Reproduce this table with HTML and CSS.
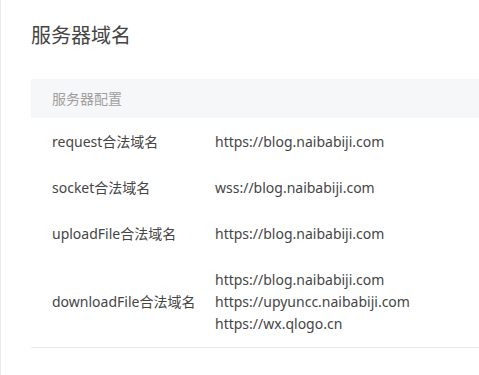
FILE: index.html
```html
<!DOCTYPE html>
<html lang="zh-CN">
<head>
<meta charset="utf-8">
<link rel="stylesheet" href="styles.css">
</head>
<body>
<div class="page">
  <h2 class="title">服务器域名</h2>
  <div class="table">
    <div class="head">服务器配置</div>
    <div class="row first"><div class="label">request合法域名</div><div class="value">https://blog.naibabiji.com</div></div>
    <div class="row"><div class="label">socket合法域名</div><div class="value">wss://blog.naibabiji.com</div></div>
    <div class="row"><div class="label">uploadFile合法域名</div><div class="value">https://blog.naibabiji.com</div></div>
    <div class="row last"><div class="label">downloadFile合法域名</div><div class="value">https://blog.naibabiji.com<br>https://upyuncc.naibabiji.com<br>https://wx.qlogo.cn</div></div>
  </div>
</div>
</body>
</html>
```
FILE: styles.css
```css
html, body {
  margin: 0;
  padding: 0;
  background: #fff;
}
body {
  font-family: "Noto Sans", "Noto Sans CJK SC", sans-serif;
  color: #454545;
  overflow: hidden;
}
.page {
  border-left: 1px solid #ececec;
  height: 375px;
  padding-left: 30px;
  box-sizing: border-box;
}
.title {
  margin: 0;
  padding-top: 22px;
  height: 79px;
  box-sizing: border-box;
  font-size: 20px;
  line-height: 28px;
  font-weight: 400;
  color: #444;
}
.table {
  font-size: 14px;
  line-height: 22px;
}
.head {
  background: #f6f7f9;
  color: #a0a0a0;
  height: 39px;
  line-height: 39px;
  padding-left: 21px;
}
.row {
  display: grid;
  grid-template-columns: 184px 1fr;
  align-items: center;
  padding: 12px 0;
}
.row.first {
  padding-top: 13px;
}
.label {
  padding-left: 21px;
  white-space: nowrap;
}
.value {
  white-space: nowrap;
}
.row.last {
  border-bottom: 1px solid #e7e7e7;
}
```
